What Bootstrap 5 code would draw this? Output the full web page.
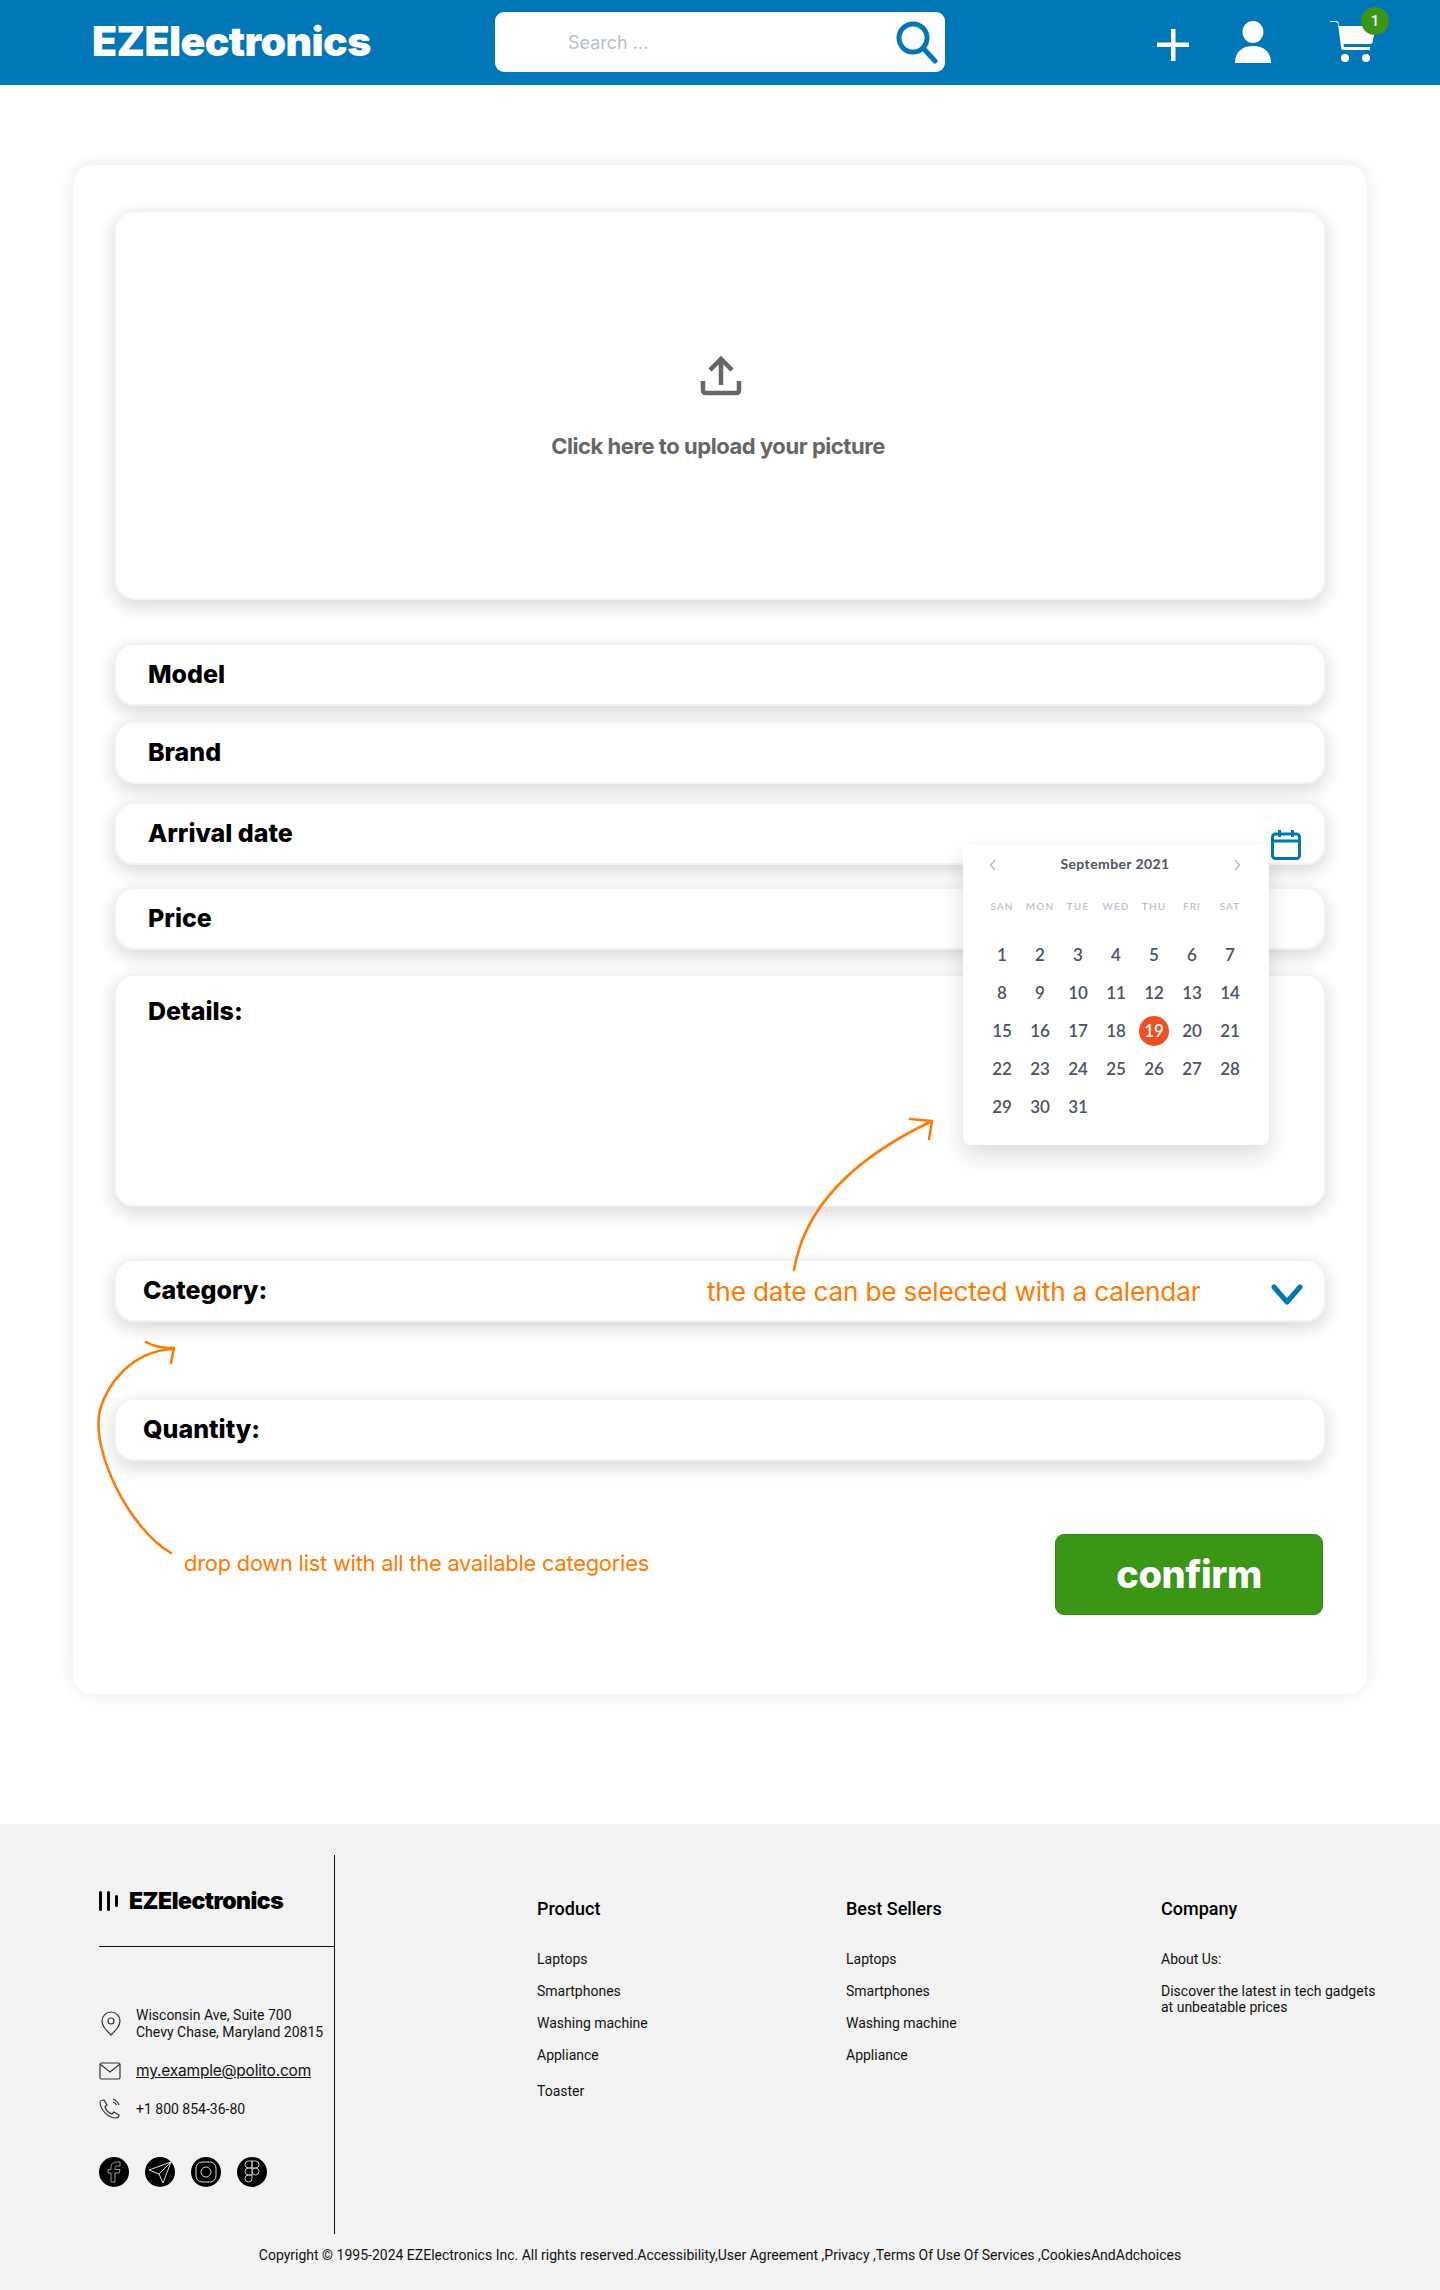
<!doctype html>
<html lang="en"><head><meta charset="utf-8"><title>EZElectronics</title>
<link href="https://cdn.jsdelivr.net/npm/bootstrap@5.3.0/dist/css/bootstrap.min.css" rel="stylesheet">
<style>
body{font-family:"Inter","Liberation Sans",sans-serif;background:#fff;position:relative;width:1440px;min-height:2290px;margin:0}
.ez-top{background:#0277b8;height:85px;padding:0;align-items:flex-start}
.ez-brand{font-weight:900;font-size:41px;color:#fff;margin-left:92px;width:403px;letter-spacing:-.6px;line-height:1;padding-top:21px}
.ez-search{width:450px;height:60px;margin-top:12px;background:#fff;border-radius:9px;padding:0 6px 0 73px}
.ez-search span{font-size:18px;color:#b8bfcc;font-weight:400}
.ez-actions{margin-left:212px;margin-top:21px;gap:0}
.ez-plus{margin-right:45px;margin-top:6px}
.ez-cartwrap{position:relative;width:50px;height:42px;margin-left:57px}
.ez-dot{position:absolute;top:-14px;left:32px;width:28px;height:28px;border-radius:50%;background:#3a9615;color:#fff;font-size:15px;font-family:"Roboto",sans-serif;font-weight:500;text-align:center;line-height:28px}
.ez-main{padding:80px 73px 130px}
.ez-panel{height:1529px;border:0;border-radius:20px;box-shadow:0 0 18px rgba(0,0,0,.09);padding:45px 41px 0 41px;display:block}
.ez-box{background:#fff;border:2px solid #f3f3f3;border-radius:20px;box-shadow:0 6px 18px rgba(0,0,0,.16);position:relative}
.ez-upload{height:390px;color:#666;font-size:22px;font-weight:700;padding-top:143px}
.ez-upload svg{display:block;margin:0 auto 33px;position:relative;left:1px}
.ez-upload p{margin:0;text-align:center;position:relative;left:-2px;letter-spacing:-.45px}
.ez-field{height:63px;padding:0 32px;font-size:25px;font-weight:800;color:#000;letter-spacing:0;display:flex;align-items:center}
.ez-m43{margin-top:43px}.ez-m14{margin-top:15px}.ez-m18{margin-top:18px}.ez-m21{margin-top:22px}.ez-m24{margin-top:24px}.ez-m53{margin-top:52px}.ez-m76{margin-top:76px}
.ez-details{height:233px;align-items:flex-start;padding-top:17px}
.ez-cat{padding-left:27px}
.ez-note{color:#ff7a00;font-weight:400;letter-spacing:-.2px}
.ez-note1{font-size:26.200px;position:absolute;left:591px;top:11px;white-space:nowrap}
.ez-cal-ico{position:absolute;left:1155px;top:26px}
.ez-chev{position:absolute;left:1155px;top:23px}
.ez-confirmrow{margin-top:73px;position:relative;height:81px}
.ez-note2{font-size:21.800px;margin-left:70px;padding-top:14px;line-height:30px}
.ez-confirm{width:268px;height:81px;background:#3a9615;border:1px solid #33880f;border-radius:9px;color:#fff;font-size:38px;font-weight:800;padding:0;letter-spacing:-.4px;margin:0 3px 0 0}
.ez-calendar{position:absolute;left:847px;top:41px;width:306px;height:300px;background:#fff;border-radius:8px;box-shadow:0 10px 24px rgba(0,0,0,.14);font-family:"Lato","Liberation Sans",sans-serif;z-index:3;padding:6px 20px 0;letter-spacing:0}
.ez-calhead{height:24px;font-size:14px;font-weight:700;color:#4b5563;letter-spacing:.4px;padding:0 8px 0 6px}
.ez-week,.ez-days{display:grid;grid-template-columns:repeat(7,38px)}
.ez-week{margin-top:25px;font-size:10px;color:#b6bdc9;letter-spacing:1.100px;text-align:center;font-weight:500;height:12px;line-height:12px}
.ez-days{margin-top:24px;grid-auto-rows:38px;font-size:17px;font-weight:600;color:#4b5563;text-align:center;line-height:38px}
.ez-days i{font-style:normal;display:block}
.ez-today{position:relative;color:#fff;z-index:0}
.ez-today::before{content:"";position:absolute;left:4px;top:4px;width:30px;height:30px;border-radius:50%;background:#f04e23;z-index:-1}
.ez-foot{background:#f2f2f2;height:466px;padding:31px 0 0 99px;color:#111;font-family:"Roboto","Liberation Sans",sans-serif;font-size:14px;line-height:16px}
.ez-left{width:236px;height:379px;border-right:1.500px solid #111;flex:none}
.ez-flogo{height:92px;border-bottom:1.500px solid #111;padding-top:34px;font-family:"Inter",sans-serif;font-weight:900;font-size:23px;line-height:24px;color:#000;letter-spacing:-.5px;gap:5px}
.ez-bars{gap:5px;height:24px;width:25px;align-items:center}
.ez-bars b{display:block;width:3px;background:#000;border-radius:2px}
.ez-addr{margin-top:60px;gap:13px;line-height:16.500px}
.ez-rowc{gap:15px;align-items:center}
.ez-r1{margin-top:22px}.ez-r2{margin-top:18px}
.ez-mail{font-family:"Inter",sans-serif;color:#111;text-decoration:underline;font-size:15.500px;letter-spacing:-.2px}
.ez-soc{margin-top:37px;gap:16px}
.ez-soc span{width:30px;height:30px;border-radius:50%;background:#000;display:flex;align-items:center;justify-content:center}
.ez-col{padding-top:44px}
.ez-col h6{font-family:"Roboto",sans-serif;font-size:18px;font-weight:500;margin:0 0 32px;line-height:20px;color:#000}
.ez-col p{margin:0 0 16px;line-height:16px}
.ez-pt5{padding-top:4px}
.ez-c1{margin-left:202px;width:309px}.ez-c2{width:315px}.ez-c3{width:225px}
.ez-copy{text-align:center;font-size:14px;padding-top:13px;margin-left:-99px;width:1440px}
.ez-over{position:absolute;left:0;top:0;pointer-events:none;z-index:5}
</style></head><body>
<nav class="navbar ez-top flex-nowrap justify-content-start">
  <div class="ez-brand">EZElectronics</div>
  <div class="ez-search d-flex align-items-center justify-content-between">
    <span>Search ...</span>
    <svg width="44" height="44" viewBox="0 0 44 44" fill="none" stroke="#0277b8" stroke-width="5"><circle cx="18" cy="18" r="14"/><path d="M28 28 L40 41" stroke-linecap="round"/></svg>
  </div>
  <div class="ez-actions d-flex align-items-center">
    <svg class="ez-plus" width="32" height="32" viewBox="0 0 32 32" fill="#fff"><path d="M14 0h4.500v13.500H32V18H18.500v14H14V18H0v-4.500h14z"/></svg>
    <svg width="38" height="42" viewBox="0 0 38 42" fill="#fff"><ellipse cx="19" cy="11" rx="10.500" ry="11"/><path d="M1 42c0-11 7-17 18-17s18 6 18 17z"/></svg>
    <div class="ez-cartwrap">
      <svg width="46" height="42" viewBox="0 0 46 42" fill="#fff"><path d="M1 1h6c1 0 2 1 2 2l3 23c0 2 1 3 3 3h26v-3H15l-.5-3h26c2 0 3-1 3-2l3-14c0-1-1-2-2-2H10L9.500 1.500C9 0 8 0 7 0H1z"/><circle cx="16" cy="37" r="4"/><circle cx="37" cy="37" r="4"/></svg>
      <div class="ez-dot">1</div>
    </div>
  </div>
</nav>
<main class="ez-main">
  <div class="card ez-panel">
    <div class="ez-box ez-upload">
      <svg width="42" height="42" viewBox="0 0 42 42" fill="none" stroke="#666" stroke-width="4.500"><path d="M21 30V6M10 15L21 4l11 11"/><path d="M3 26v9c0 2 1 3 3 3h30c2 0 3-1 3-3v-9"/></svg>
      <p>Click here to upload your picture</p>
    </div>
    <div class="ez-box ez-field ez-m43">Model</div>
    <div class="ez-box ez-field ez-m14">Brand</div>
    <div class="ez-box ez-field ez-m18">Arrival date
      <div class="ez-calendar">
        <div class="ez-calhead d-flex align-items-center justify-content-between">
          <svg width="8" height="12" viewBox="0 0 8 12" fill="none" stroke="#b6bdc9" stroke-width="1.500" class="mt-1"><path d="M6 1L1.500 6 6 11"/></svg>
          <span>September 2021</span>
          <svg width="8" height="12" viewBox="0 0 8 12" fill="none" stroke="#b6bdc9" stroke-width="1.500" class="mt-1"><path d="M2 1l4.500 5L2 11"/></svg>
        </div>
        <div class="ez-week"><span>SAN</span><span>MON</span><span>TUE</span><span>WED</span><span>THU</span><span>FRI</span><span>SAT</span></div>
        <div class="ez-days"><i>1</i><i>2</i><i>3</i><i>4</i><i>5</i><i>6</i><i>7</i><i>8</i><i>9</i><i>10</i><i>11</i><i>12</i><i>13</i><i>14</i><i>15</i><i>16</i><i>17</i><i>18</i><i class="ez-today">19</i><i>20</i><i>21</i><i>22</i><i>23</i><i>24</i><i>25</i><i>26</i><i>27</i><i>28</i><i>29</i><i>30</i><i>31</i></div>
      </div>
      <svg class="ez-cal-ico" width="30" height="30" viewBox="0 0 30 30" fill="none" stroke="#0277b8" stroke-width="3"><rect x="1.500" y="4" width="27" height="24.500" rx="3"/><path d="M1.500 11h27M8.500 0v7M21.500 0v7"/></svg>
    </div>
    <div class="ez-box ez-field ez-m21">Price</div>
    <div class="ez-box ez-field ez-details ez-m24">Details:</div>
    <div class="ez-box ez-field ez-cat ez-m53">Category:
      <span class="ez-note ez-note1">the date can be selected with a calendar</span>
      <svg class="ez-chev" width="32" height="22" viewBox="0 0 32 22" fill="none" stroke="#0277b8" stroke-width="5" stroke-linecap="round" stroke-linejoin="round"><path d="M3 3l13 15L29 3"/></svg>
    </div>
    <div class="ez-box ez-field ez-cat ez-m76">Quantity:</div>
    <div class="ez-confirmrow d-flex justify-content-between align-items-start">
      <div class="ez-note ez-note2">drop down list with all the available categories</div>
      <button class="btn ez-confirm" type="button">confirm</button>
    </div>
  </div>
</main>
<footer class="ez-foot">
  <div class="d-flex">
    <div class="ez-left">
      <div class="ez-flogo d-flex align-items-start"><span class="ez-bars d-flex"><b style="height:20px"></b><b style="height:20px"></b><b style="height:12px"></b></span><span>EZElectronics</span></div>
      <div class="ez-addr d-flex"><svg class="flex-none mt-1" width="24" height="26" viewBox="0 0 24 26" fill="none" stroke="#333" stroke-width="1.200"><path d="M12 24C7 19 3 15 3 10a9 9 0 0 1 18 0c0 5-4 9-9 14z"/><circle cx="12" cy="10" r="3"/></svg><div>Wisconsin Ave, Suite 700<br>Chevy Chase, Maryland 20815</div></div>
      <div class="d-flex ez-rowc ez-r1"><svg width="22" height="18" viewBox="0 0 22 18" fill="none" stroke="#333" stroke-width="1.200"><rect x="1" y="1" width="20" height="16" rx="1.500"/><path d="M1 2l10 8 10-8"/></svg><a class="ez-mail" href="#">my.example@polito.com</a></div>
      <div class="d-flex ez-rowc ez-r2"><svg width="22" height="22" viewBox="0 0 22 22" fill="none" stroke="#333" stroke-width="1.200"><path d="M5 2l3 5-2 2c1 3 4 6 7 7l2-2 5 3c0 2-1 3-3 3C9 20 2 12 1 5c0-2 2-3 4-3zM14 1c3 1 5 3 6 6M14 4c2 .5 3 1.500 3.500 3"/></svg><span>+1 800 854-36-80</span></div>
      <div class="ez-soc d-flex">
        <span><svg width="14" height="22" viewBox="0 0 14 22" fill="none" stroke="#999"><path d="M4 21v-9H1V8.500h3V6c0-3 2-5 5-5h4v4h-3C9 5 8 6 8 7v1.500h5l-.7 3.500H8v9z"/></svg></span>
        <span><svg width="24" height="24" viewBox="0 0 24 24" fill="none" stroke="#ddd"><path d="M1 10L23 2l-8 21-4-9zM11 14L23 2"/></svg></span>
        <span><svg width="24" height="24" viewBox="0 0 24 24" fill="none" stroke="#ddd"><rect x="2" y="2" width="20" height="20" rx="6"/><circle cx="12" cy="12" r="5"/></svg></span>
        <span><svg width="16" height="24" viewBox="0 0 16 24" fill="none" stroke="#ccc"><path d="M8 1H4.500a3.500 3.500 0 0 0 0 7H8zM8 1h3.500a3.500 3.500 0 0 1 0 7H8zM8 8H4.500a3.500 3.500 0 0 0 0 7H8zM8 15H4.500A3.500 3.500 0 1 0 8 18.500zM8 11.500a3.500 3.500 0 1 0 7 0 3.500 3.500 0 0 0-7 0z"/></svg></span>
      </div>
    </div>
    <div class="ez-col ez-c1"><h6>Product</h6><p>Laptops</p><p>Smartphones</p><p>Washing machine</p><p>Appliance</p><p class="ez-pt5">Toaster</p></div>
    <div class="ez-col ez-c2"><h6>Best Sellers</h6><p>Laptops</p><p>Smartphones</p><p>Washing machine</p><p>Appliance</p></div>
    <div class="ez-col ez-c3"><h6>Company</h6><p>About Us:</p><p>Discover the latest in tech gadgets<br>at unbeatable prices</p></div>
  </div>
  <div class="ez-copy">Copyright © 1995-2024 EZElectronics Inc. All rights reserved.Accessibility,User Agreement ,Privacy ,Terms Of Use Of Services ,CookiesAndAdchoices</div>
</footer>
<svg class="ez-over" width="1440" height="2290" viewBox="0 0 1440 2290" fill="none" stroke="#ff7a00" stroke-width="2.500" stroke-linecap="round" stroke-linejoin="round">
  <path d="M794 1270C804 1210 850 1160 932 1121M910 1119l22 2-3 18"/>
  <path d="M171 1553C130 1530 90 1450 100 1410C107 1385 130 1352 172 1349M146 1342c8 5 16 6 28 6l-3 15"/>
</svg>
<script src="https://cdn.jsdelivr.net/npm/bootstrap@5.3.0/dist/js/bootstrap.bundle.min.js"></script>
</body></html>
